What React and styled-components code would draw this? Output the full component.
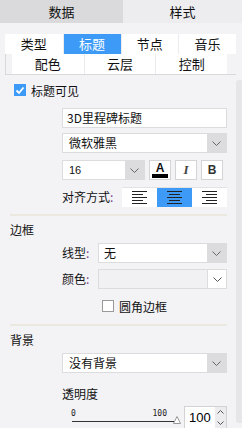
import React from "react";
import styled, { createGlobalStyle } from "styled-components";

const Global = createGlobalStyle`
  html, body { margin: 0; padding: 0; background: #f3f3f6; }
  * { box-sizing: border-box; }
`;

const Root = styled.div`
  width: 242px;
  height: 428px;
  overflow: hidden;
  background: #f3f3f6;
  font-family: "Noto Sans CJK SC", "Microsoft YaHei", sans-serif;
  font-size: 12px;
  color: #111;
  display: flex;
  flex-direction: column;
`;

const TopTabs = styled.div`
  display: flex;
  height: 23px;
  flex: none;
`;

const TopTab = styled.div`
  width: ${(p) => (p.$active ? "auto" : "123px")};
  flex: ${(p) => (p.$active ? "1" : "none")};
  background: ${(p) => (p.$active ? "#ededf0" : "#dadadc")};
  font-size: 13px;
  line-height: 23px;
  text-align: center;
  color: #111;
`;

const Body = styled.div`
  display: flex;
  flex: 1;
  min-height: 0;
`;

const Main = styled.div`
  width: 236px;
  flex: none;
  display: flex;
  flex-direction: column;
`;

const ScrollTrack = styled.div`
  width: 6px;
  flex: none;
  margin: 57px 0 5px;
  border-radius: 3px 0 0 3px;
  background: #e6e6e8;
`;

const SubFrame = styled.div`
  margin: 11px 0 0 5px;
  width: 231px;
`;

const SubRow = styled.div`
  display: grid;
  grid-template-columns: repeat(${(p) => p.$cols}, 1fr);
  height: 20px;
`;

const SubRow2Wrap = styled.div`
  border-left: 1px solid #d9d9dc;
  border-bottom: 1px solid #d9d9dc;
  padding: 0 9px 0 6px;
`;

const SubTab = styled.div`
  background: ${(p) => (p.$active ? "#3d9bf7" : "#fff")};
  color: ${(p) => (p.$active ? "#fff" : "#111")};
  font-size: 13px;
  line-height: 20px;
  text-align: center;
  border-left: ${(p) => (p.$first ? "none" : "1px solid #ececee")};
`;

const CheckRow = styled.div`
  display: flex;
  align-items: center;
  gap: 5px;
  height: 16px;
  margin: ${(p) => p.$mt}px 0 0 ${(p) => p.$ml}px;
  font-size: 12px;
`;

const Box = styled.span`
  width: 12px;
  height: 12px;
  flex: none;
  display: flex;
  align-items: center;
  justify-content: center;
  background: ${(p) => (p.$checked ? "#3d9bf7" : "#fff")};
  border: ${(p) => (p.$checked ? "none" : "1px solid #9a9a9a")};
`;

const Field = styled.div`
  margin: ${(p) => p.$mt}px 0 0 62px;
  width: 165px;
  height: 20px;
  display: flex;
  align-items: center;
`;

const TextInput = styled.div`
  width: 100%;
  height: 20px;
  border: 1px solid #dcdcdf;
  background: #fff;
  padding-left: 4px;
  line-height: 18px;
  font-size: 12px;
`;

const Select = styled.div`
  display: flex;
  height: 20px;
  width: ${(p) => (p.$w ? `${p.$w}px` : "auto")};
  flex: ${(p) => (p.$w ? "none" : "1")};
  border: 1px solid #dcdcdf;
  background: ${(p) => (p.$disabled ? "#f1f1f3" : "#fff")};
`;

const SelectText = styled.div`
  flex: 1;
  padding-left: ${(p) => p.$pl ?? 6}px;
  line-height: 18px;
  font-size: ${(p) => p.$fs ?? 12}px;
  font-family: ${(p) => (p.$latin ? '"Liberation Sans", Arial, sans-serif' : "inherit")};
`;

const Arrow = styled.div`
  width: 19px;
  flex: none;
  display: flex;
  align-items: center;
  justify-content: center;
  background: ${(p) => (p.$disabled ? "#fff" : "#dcdcdf")};
  border-left: ${(p) => (p.$disabled ? "1px solid #dcdcdf" : "none")};
`;

const FmtBtn = styled.div`
  width: 22px;
  height: 20px;
  flex: none;
  margin-left: 4px;
  border: 1px solid #d4d4d7;
  background: #fff;
  display: flex;
  flex-direction: column;
  align-items: center;
  justify-content: center;
  color: #333;
`;

const GlyphA = styled.span`
  font-family: "Liberation Sans", Arial, sans-serif;
  font-weight: bold;
  font-size: 12px;
  line-height: 10px;
  color: #111;
`;

const ColorBar = styled.span`
  width: 16px;
  height: 4px;
  margin-top: 1px;
  background: #000;
`;

const GlyphI = styled.span`
  font-family: "Liberation Serif", serif;
  font-style: italic;
  font-weight: bold;
  font-size: 13px;
  line-height: 14px;
  color: #444;
`;

const GlyphB = styled.span`
  font-family: "Liberation Sans", Arial, sans-serif;
  font-weight: bold;
  font-size: 12px;
  line-height: 14px;
  color: #333;
`;

const Label = styled.span`
  width: ${(p) => p.$w}px;
  flex: none;
  font-size: 12px;
  line-height: 16px;
  white-space: nowrap;
`;

const Colon = styled.span`
  color: #7a3f8c;
`;

const AlignGroup = styled.div`
  display: flex;
  width: 105px;
  height: 20px;
  border-top: 1px solid #e2e2e4;
  background: #fff;
`;

const AlignBtn = styled.div`
  flex: 1;
  display: flex;
  align-items: center;
  justify-content: center;
  background: ${(p) => (p.$active ? "#3d9bf7" : "#fff")};
`;

const Sep = styled.div`
  margin: ${(p) => p.$mt}px 0 0 10px;
  width: 217px;
  height: 2px;
  background: #ebe8df;
`;

const Heading = styled.div`
  margin: 6px 0 0 10px;
  font-size: 12px;
  line-height: 16px;
`;

const SubHeading = styled.div`
  margin: 14px 0 0 62px;
  font-size: 12px;
  line-height: 14px;
`;

const SliderRow = styled.div`
  margin: 4px 0 0 62px;
  display: flex;
  height: 23px;
`;

const SliderBox = styled.div`
  position: relative;
  width: 118px;
  padding: 4px 0 0 9px;
`;

const SliderLabels = styled.div`
  display: flex;
  justify-content: space-between;
  width: 96px;
  font-family: "DejaVu Sans Mono", "Liberation Mono", monospace;
  font-size: 8px;
  line-height: 10px;
  color: #222;
`;

const SliderTrack = styled.div`
  margin: 2px 0 0 1px;
  width: 104px;
  height: 1px;
  background: #333;
`;

const Thumb = styled.svg`
  position: absolute;
  left: 111px;
  top: 11px;
`;

const NumBox = styled.div`
  margin: 1px 0 0 4px;
  width: 43px;
  height: 23px;
  display: flex;
  border: 1px solid #d2d2d5;
  background: #fff;
`;

const NumText = styled.div`
  flex: 1;
  padding-left: 4px;
  font-family: "Liberation Sans", Arial, sans-serif;
  font-size: 13px;
  line-height: 21px;
  color: #000;
`;

const Spinner = styled.div`
  width: 11px;
  flex: none;
  display: flex;
  flex-direction: column;
  align-items: center;
  justify-content: space-around;
  background: #ececee;
`;

const Chevron = ({ disabled }) => (
  <svg width="9" height="5" viewBox="0 0 9 5">
    <path d="M0.5 0.5 L4.5 4.5 L8.5 0.5" fill="none" stroke={disabled ? "#555" : "#666"} strokeWidth="1" />
  </svg>
);

const Check = () => (
  <svg width="10" height="9" viewBox="0 0 10 9">
    <path d="M1.5 4.5 L4 7 L8.5 1.5" fill="none" stroke="#fff" strokeWidth="1.8" />
  </svg>
);

const AlignIcon = ({ mode }) => {
  const long = 15;
  const short = 11;
  const rows = [long, short, long, short, long];
  return (
    <svg width="15" height="13" viewBox="0 0 15 13">
      {rows.map((w, i) => {
        let x = 0;
        if (mode === "center") x = (15 - w) / 2;
        if (mode === "right") x = 15 - w;
        return <rect key={i} x={x} y={i * 3} width={w} height="1" fill="#222" />;
      })}
    </svg>
  );
};

const SubTabs = () => {
  const row1 = ["类型", "标题", "节点", "音乐"];
  const row2 = ["配色", "云层", "控制"];
  return (
    <SubFrame>
      <SubRow $cols={4}>
        {row1.map((t, i) => (
          <SubTab key={t} $first={i === 0} $active={t === "标题"}>
            {t}
          </SubTab>
        ))}
      </SubRow>
      <SubRow2Wrap>
        <SubRow $cols={3}>
          {row2.map((t, i) => (
            <SubTab key={t} $first={i === 0}>
              {t}
            </SubTab>
          ))}
        </SubRow>
      </SubRow2Wrap>
    </SubFrame>
  );
};

export default function App() {
  return (
    <Root>
      <Global />
      <TopTabs>
        <TopTab>数据</TopTab>
        <TopTab $active>样式</TopTab>
      </TopTabs>
      <Body>
        <Main>
          <SubTabs />
          <CheckRow $mt={7} $ml={14}>
            <Box $checked>
              <Check />
            </Box>
            标题可见
          </CheckRow>
          <Field $mt={10}>
            <TextInput>3D里程碑标题</TextInput>
          </Field>
          <Field $mt={5}>
            <Select>
              <SelectText>微软雅黑</SelectText>
              <Arrow>
                <Chevron />
              </Arrow>
            </Select>
          </Field>
          <Field $mt={7}>
            <Select $w={83}>
              <SelectText $latin $fs={11}>16</SelectText>
              <Arrow>
                <Chevron />
              </Arrow>
            </Select>
            <FmtBtn>
              <GlyphA>A</GlyphA>
              <ColorBar />
            </FmtBtn>
            <FmtBtn>
              <GlyphI>I</GlyphI>
            </FmtBtn>
            <FmtBtn>
              <GlyphB>B</GlyphB>
            </FmtBtn>
          </Field>
          <Field $mt={7}>
            <Label $w={60}>
              对齐方式<Colon>:</Colon>
            </Label>
            <AlignGroup>
              <AlignBtn>
                <AlignIcon mode="left" />
              </AlignBtn>
              <AlignBtn $active>
                <AlignIcon mode="center" />
              </AlignBtn>
              <AlignBtn>
                <AlignIcon mode="right" />
              </AlignBtn>
            </AlignGroup>
          </Field>
          <Sep $mt={7} />
          <Heading>边框</Heading>
          <Field $mt={5}>
            <Label $w={36}>
              线型<Colon>:</Colon>
            </Label>
            <Select>
              <SelectText $pl={5}>无</SelectText>
              <Arrow>
                <Chevron />
              </Arrow>
            </Select>
          </Field>
          <Field $mt={6}>
            <Label $w={36}>
              颜色<Colon>:</Colon>
            </Label>
            <Select $disabled>
              <SelectText />
              <Arrow $disabled>
                <Chevron disabled />
              </Arrow>
            </Select>
          </Field>
          <CheckRow $mt={9} $ml={102}>
            <Box />
            圆角边框
          </CheckRow>
          <Sep $mt={10} />
          <Heading>背景</Heading>
          <Field $mt={5}>
            <Select>
              <SelectText>没有背景</SelectText>
              <Arrow>
                <Chevron />
              </Arrow>
            </Select>
          </Field>
          <SubHeading>透明度</SubHeading>
          <SliderRow>
            <SliderBox>
              <SliderLabels>
                <span>0</span>
                <span>100</span>
              </SliderLabels>
              <SliderTrack />
              <Thumb width="8" height="8" viewBox="0 0 8 8">
                <path d="M4 0.5 L7.5 7.5 L0.5 7.5 Z" fill="#fff" stroke="#9a9a9a" strokeWidth="1" />
              </Thumb>
            </SliderBox>
            <NumBox>
              <NumText>100</NumText>
              <Spinner>
                <svg width="7" height="4" viewBox="0 0 7 4">
                  <path d="M0.5 3.5 L3.5 0.5 L6.5 3.5" fill="none" stroke="#555" strokeWidth="1" />
                </svg>
                <svg width="7" height="4" viewBox="0 0 7 4">
                  <path d="M0.5 0.5 L3.5 3.5 L6.5 0.5" fill="none" stroke="#555" strokeWidth="1" />
                </svg>
              </Spinner>
            </NumBox>
          </SliderRow>
        </Main>
        <ScrollTrack />
      </Body>
    </Root>
  );
}
